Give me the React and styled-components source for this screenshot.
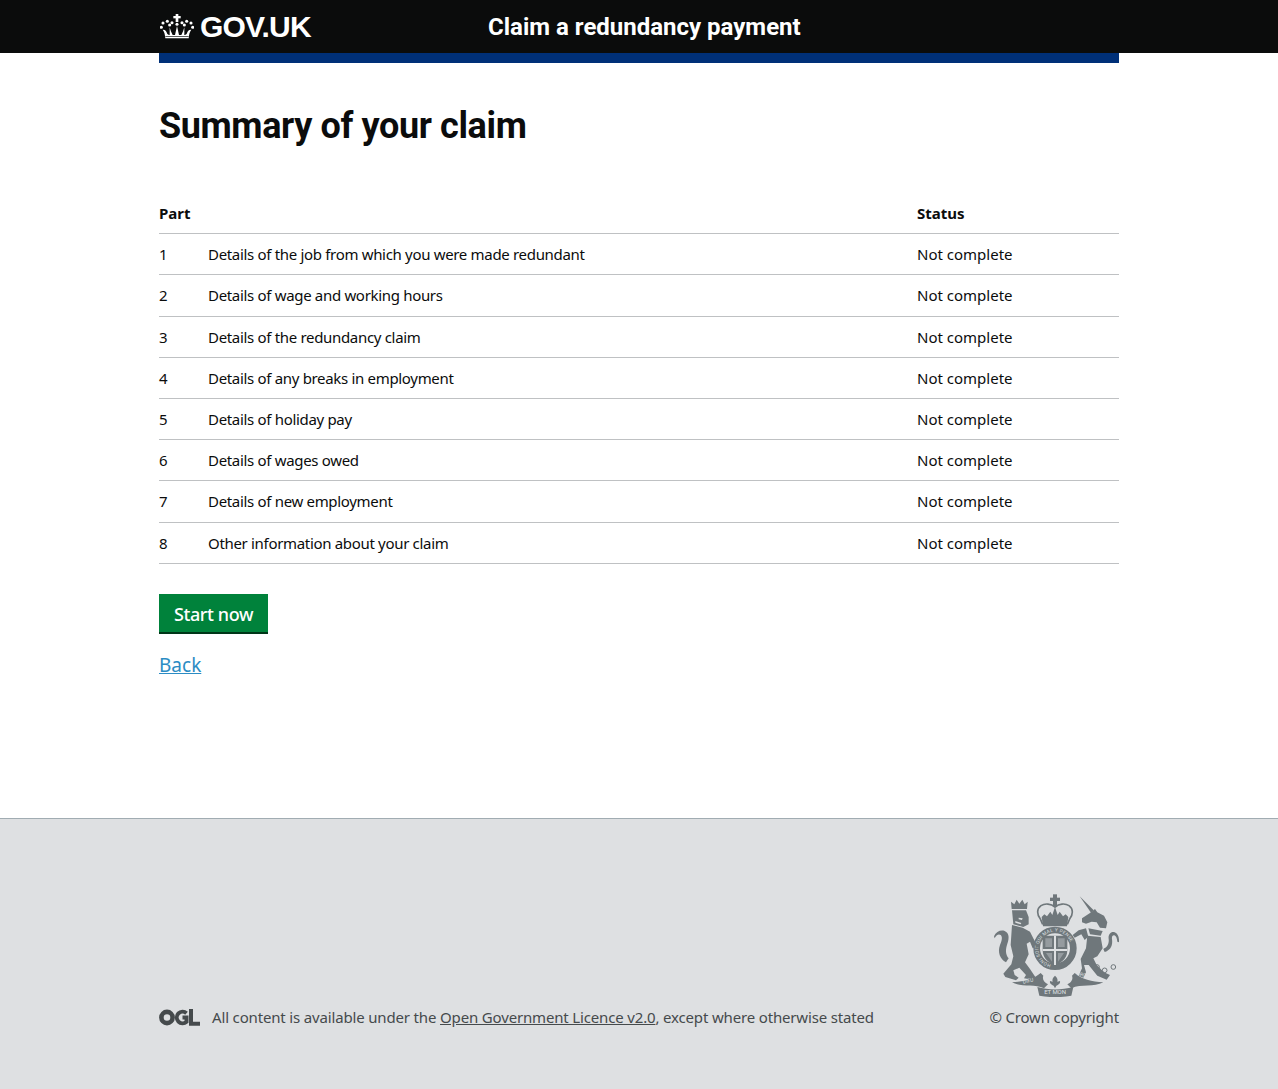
import styled, { createGlobalStyle } from "styled-components";

const GlobalStyle = createGlobalStyle`
  html, body {
    margin: 0;
    padding: 0;
    background: #fff;
    color: #0b0c0c;
    font-family: "Noto Sans", Arial, sans-serif;
  }
`;

const Page = styled.div`
  min-height: 1089px;
  display: flex;
  flex-direction: column;
`;

const Header = styled.header`
  background: #0b0c0c;
  height: 53px;
`;

const Wrap = styled.div`
  width: 960px;
  margin-left: 159px;
`;

const HeaderInner = styled(Wrap)`
  display: flex;
  align-items: center;
  height: 53px;
`;

const Logo = styled.div`
  width: 329px;
  box-sizing: border-box;
  padding-left: 1px;
  display: flex;
  align-items: center;
  gap: 6px;
  color: #fff;
  font-family: "Liberation Sans", Arial, sans-serif;
  font-weight: 700;
  font-size: 30px;
  letter-spacing: -0.8px;
`;

const ServiceName = styled.div`
  font-family: Roboto, Arial, sans-serif;
  color: #fff;
  font-weight: 700;
  font-size: 24px;
  white-space: nowrap;
`;

const BlueBar = styled(Wrap)`
  height: 10px;
  background: #003078;
`;

const Main = styled(Wrap)`
  flex: 1;
`;

const Title = styled.h1`
  margin: 42px 0 0;
  font-family: Roboto, Arial, sans-serif;
  font-size: 36px;
  line-height: 42px;
  font-weight: 700;
  letter-spacing: -0.38px;
`;

const Table = styled.table`
  width: 100%;
  margin-top: 46px;
  border-collapse: collapse;
  font-size: 15px;
`;

const Th = styled.th`
  height: 40.2px;
  padding: 0;
  text-align: left;
  font-weight: 700;
  border-bottom: 1px solid #bfc1c3;
`;

const Td = styled.td`
  height: 40.2px;
  padding: 0;
  border-bottom: 1px solid #bfc1c3;
  width: ${(p) => p.$width || "auto"};
`;

const PartName = styled(Td)`
  letter-spacing: -0.32px;
`;

const StartButton = styled.button`
  display: block;
  margin-top: 30px;
  width: 109px;
  height: 40px;
  padding: 0;
  border: 0;
  box-shadow: inset 0 -2px 0 #003618;
  background: #00823b;
  color: #fff;
  font-family: inherit;
  font-size: 18px;
  font-weight: 500;
  letter-spacing: -0.4px;
`;

const BackLink = styled.a`
  display: inline-block;
  margin-top: 19px;
  font-size: 19px;
  line-height: 25px;
  color: #2b8cc4;
  text-decoration: underline;
`;

const Footer = styled.footer`
  height: 271px;
  box-sizing: border-box;
  border-top: 1px solid #a1acb2;
  background: #dee0e2;
  color: #454a4c;
  font-size: 15px;
  letter-spacing: -0.16px;
`;

const FooterInner = styled(Wrap)`
  display: flex;
  justify-content: space-between;
  align-items: flex-end;
  height: 208px;
`;

const Licence = styled.div`
  display: flex;
  align-items: center;
  gap: 12px;
`;

const Copyright = styled.div`
  display: flex;
  flex-direction: column;
  align-items: flex-end;
  gap: 10px;
`;

const FooterLink = styled.a`
  color: #454a4c;
  text-decoration: underline;
`;

const Crown = () => (
  <svg width="34" height="25" viewBox="0 0 100 75" fill="#fff" aria-hidden="true">
    <rect x="46" y="0" width="8" height="24" />
    <rect x="39" y="6" width="22" height="7" />
    {[[50, 31], [35, 26], [65, 26], [21, 22], [79, 22], [8, 27], [92, 27], [3, 40], [97, 40], [28, 33], [72, 33]].map(([cx, cy]) => (
      <circle key={`${cx}-${cy}`} cx={cx} cy={cy} r="4.6" />
    ))}
    <path d="M7 47c8-1 12 5 14 13l5 3h48l5-3c2-8 6-14 14-13-5 6-7 14-8 26H15C14 61 12 53 7 47z" />
    <path d="M50 36l6 27H44zM28 40c2 8 5 16 9 23h-9zM72 40c-2 8-5 16-9 23h9z" />
    <rect x="15" y="66" width="70" height="2" fill="#0b0c0c" />
  </svg>
);

const Ogl = () => (
  <svg width="41" height="17" viewBox="0 0 41 17" fill="none" stroke="#454a4c" aria-hidden="true">
    <circle cx="8" cy="8.5" r="5.6" strokeWidth="4.6" />
    <path d="M27.5 4.2A5.8 5.8 0 1 0 27.5 12.8V8.6h-4" strokeWidth="4" />
    <path d="M32 0v14.8h9" strokeWidth="4" />
  </svg>
);

const Crest = () => (
  <svg width="125" height="103" viewBox="42 27 375 309" fill="#6f777b" aria-hidden="true">
    <defs>
      <path id="garter" d="M225 240a50 50 0 1 1 .1 0" />
    </defs>
    {/* lion */}
    <path d="M95 72l-2-22 10 8 7-14 8 12 9-12 7 14 9-8-2 22z" />
    <path d="M96 76h42l8 20v22l-16 8-30-8z" />
    <path d="M96 120l32 8 22 12 22 44-14 6-8-20-10 6 6 32-11 24 15 20 16 24-8 8-26-4 6-10-20-22-18 8 4 14 12 8-8 8-32-10-6-10 24-28 6-24-8-34 2-30z" />
    <path d="M78 232c-18-10-26-30-18-52 6-14 8-24 2-30-6-4-14 0-18 10l-2-6c6-14 20-20 32-16 14 6 14 22 8 38-6 18-6 32 4 44z" />
    <path d="M116 98l12 2-2 5-10-2zM106 108l18 6-2 4-16-5z" fill="#dee0e2" />
    {/* unicorn */}
    <path d="M299 34l42 42-8 7z" />
    <path d="M306 100l24-16 15-12 7 10 20 10 10 20-4 18-18-2-10-16-15-2-17 6-12-4z" />
    <path d="M325 130l43 8-6 14-32-4z" />
    <path d="M322 152l40 4 6 34-16 24-12 6 10 20 22 22 18 8-10 14-28-12-26-32h-14l6 22-8 16-14-6 10-22-4-28 16-32z" />
    <path d="M325 155l-7-25-22 6-18 14 6 8 20-10 10 17z" />
    <path d="M370 192c10-4 18-14 16-30-2-12 6-24 18-20 10 4 14 16 13 30l-5-2c-1-10-4-18-9-19-6-1-8 5-7 12 3 20-6 34-22 38z" />
    <circle cx="351" cy="246" r="7" fill="none" stroke="#6f777b" strokeWidth="3" />
    <circle cx="374" cy="256" r="7" fill="none" stroke="#6f777b" strokeWidth="3" />
    <circle cx="400" cy="246" r="7" fill="none" stroke="#6f777b" strokeWidth="3" />
    {/* crown */}
    <rect x="219" y="28" width="12" height="36" />
    <rect x="210" y="38" width="30" height="10" />
    <path d="M225 66c-12-10-30-12-42-4-14 10-12 28-2 40l6 14h76l6-14c10-12 12-30-2-40-12-8-30-6-42 4z" fill="none" stroke="#6f777b" strokeWidth="5" />
    <path d="M185 96l8-8 8 6 10-14 6 10 8-24 8 24 6-10 10 14 8-6 8 8-4 28h-72z" />
    {/* garter */}
    <circle cx="225" cy="190" r="55" fill="none" stroke="#6f777b" strokeWidth="20" />
    <text fontSize="14" fontFamily="Roboto, sans-serif" fill="#dee0e2" letterSpacing="0.8">
      <textPath href="#garter" startOffset="4%">HONI SOIT QUI MAL Y PENSE</textPath>
    </text>
    <path d="M188 152h74v44c0 26-20 38-37 46-17-8-37-20-37-46z" />
    <path d="M222 152h6v88h-6zM188 192h74v6h-74z" fill="#dee0e2" />
    <path d="M196 160h20v26h-20zM234 160h20v26h-20zM198 204h18v26zM252 204h-18v26z" fill="#dee0e2" opacity="0.35" />
    {/* motto */}
    <path d="M96 292c34-2 66-10 86-28l8 8c-4 10 2 20 14 26l-12 12c-30-14-68-2-96-18z" />
    <path d="M370 292c-34-2-66-10-86-28l-8 8c4 10-2 20-14 26l12 12c30-14 68-2 96-18z" />
    <path d="M172 306c34 10 72 10 108 0l-6 26c-30 6-66 6-96 0z" />
    <path d="M225 272c7 6 9 12 7 18l8-2c2 8-6 12-11 14l-4 8-4-8c-5-2-13-6-11-14l8 2c-2-6 0-12 7-18z" />
    <text x="225" y="327" fontSize="18" fontFamily="Roboto, sans-serif" textAnchor="middle" fill="#dee0e2">ET MON</text>
    <text x="130" y="296" fontSize="15" fontFamily="Roboto, sans-serif" fill="#dee0e2" transform="rotate(-14 130 296)">DIEU</text>
    <text x="290" y="270" fontSize="15" fontFamily="Roboto, sans-serif" fill="#dee0e2" transform="rotate(14 290 270)">DROIT</text>
  </svg>
);

const parts = [
  "Details of the job from which you were made redundant",
  "Details of wage and working hours",
  "Details of the redundancy claim",
  "Details of any breaks in employment",
  "Details of holiday pay",
  "Details of wages owed",
  "Details of new employment",
  "Other information about your claim",
];

export default function App() {
  return (
    <Page>
      <GlobalStyle />
      <Header>
        <HeaderInner>
          <Logo>
            <Crown />
            GOV.UK
          </Logo>
          <ServiceName>Claim a redundancy payment</ServiceName>
        </HeaderInner>
      </Header>
      <BlueBar />
      <Main>
        <Title>Summary of your claim</Title>
        <Table>
          <thead>
            <tr>
              <Th colSpan={2}>Part</Th>
              <Th>Status</Th>
            </tr>
          </thead>
          <tbody>
            {parts.map((part, i) => (
              <tr key={part}>
                <Td $width="49px">{i + 1}</Td>
                <PartName $width="709px">{part}</PartName>
                <Td>Not complete</Td>
              </tr>
            ))}
          </tbody>
        </Table>
        <StartButton>Start now</StartButton>
        <BackLink href="#">Back</BackLink>
      </Main>
      <Footer>
        <FooterInner>
          <Licence>
            <Ogl />
            <span>
              All content is available under the{" "}
              <FooterLink href="#">Open Government Licence v2.0</FooterLink>, except where otherwise stated
            </span>
          </Licence>
          <Copyright>
            <Crest />
            <span>© Crown copyright</span>
          </Copyright>
        </FooterInner>
      </Footer>
    </Page>
  );
}
